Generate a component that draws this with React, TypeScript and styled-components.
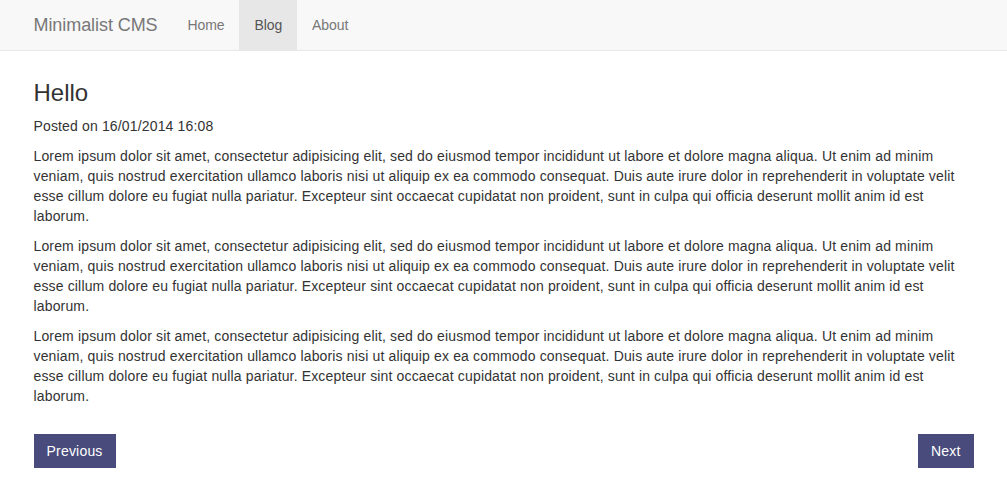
import React from "react";
import styled, { createGlobalStyle } from "styled-components";

const GlobalStyle = createGlobalStyle`
  html, body {
    margin: 0;
    padding: 0;
    background: #fff;
  }
  body {
    font-family: "Liberation Sans", Arial, Helvetica, sans-serif;
    font-size: 14px;
    line-height: 20px;
    color: #333;
  }
`;

const StyledNavbar = styled.nav`
  height: 50px;
  background-color: #f8f8f8;
  border-bottom: 1px solid #e7e7e7;
`;

const StyledContainer = styled.div`
  width: 970px;
  margin: 0 auto;
  padding: 0 15px;
  box-sizing: border-box;
  display: flex;
  flex-direction: column;
`;

const StyledNavInner = styled(StyledContainer)`
  flex-direction: row;
  align-items: stretch;
  height: 50px;
`;

const StyledBrand = styled.a`
  display: block;
  padding: 15px;
  margin-left: -15px;
  font-size: 18px;
  line-height: 20px;
  letter-spacing: -0.07px;
  color: #777;
  text-decoration: none;
`;

const StyledNavList = styled.ul`
  display: flex;
  list-style: none;
  margin: 0;
  padding: 0;
`;

const StyledNavLink = styled.a<{ $active?: boolean }>`
  display: block;
  padding: 15px;
  line-height: 20px;
  letter-spacing: -0.1px;
  text-decoration: none;
  color: ${(p) => (p.$active ? "#555" : "#777")};
  background-color: ${(p) => (p.$active ? "#e7e7e7" : "transparent")};
`;

const StyledTitle = styled.h3`
  font-size: 24px;
  font-weight: 500;
  line-height: 1.1;
  margin: 29px 0 10px;
`;

const StyledParagraph = styled.p`
  margin: 0 0 10px;
  letter-spacing: 0.15px;
`;

const StyledPager = styled.div`
  display: flex;
  justify-content: space-between;
  margin-top: 18px;
`;

const StyledPagerButton = styled.a`
  display: inline-block;
  padding: 6px 12px;
  border: 1px solid #484b7b;
  background-color: #484b7b;
  color: #fff;
  font-size: 14px;
  line-height: 20px;
  letter-spacing: 0.2px;
  text-decoration: none;
`;

const lorem =
  "Lorem ipsum dolor sit amet, consectetur adipisicing elit, sed do eiusmod tempor incididunt ut labore et dolore magna aliqua. Ut enim ad minim veniam, quis nostrud exercitation ullamco laboris nisi ut aliquip ex ea commodo consequat. Duis aute irure dolor in reprehenderit in voluptate velit esse cillum dolore eu fugiat nulla pariatur. Excepteur sint occaecat cupidatat non proident, sunt in culpa qui officia deserunt mollit anim id est laborum.";

const navItems = [
  { label: "Home", active: false },
  { label: "Blog", active: true },
  { label: "About", active: false },
];

function App() {
  return (
    <>
      <GlobalStyle />
      <StyledNavbar>
        <StyledNavInner>
          <StyledBrand href="#">Minimalist CMS</StyledBrand>
          <StyledNavList>
            {navItems.map((item) => (
              <li key={item.label}>
                <StyledNavLink href="#" $active={item.active}>
                  {item.label}
                </StyledNavLink>
              </li>
            ))}
          </StyledNavList>
        </StyledNavInner>
      </StyledNavbar>
      <StyledContainer>
        <StyledTitle>Hello</StyledTitle>
        <StyledParagraph>Posted on 16/01/2014 16:08</StyledParagraph>
        <StyledParagraph>{lorem}</StyledParagraph>
        <StyledParagraph>{lorem}</StyledParagraph>
        <StyledParagraph>{lorem}</StyledParagraph>
        <StyledPager>
          <StyledPagerButton href="#">Previous</StyledPagerButton>
          <StyledPagerButton href="#">Next</StyledPagerButton>
        </StyledPager>
      </StyledContainer>
    </>
  );
}

export default App;
